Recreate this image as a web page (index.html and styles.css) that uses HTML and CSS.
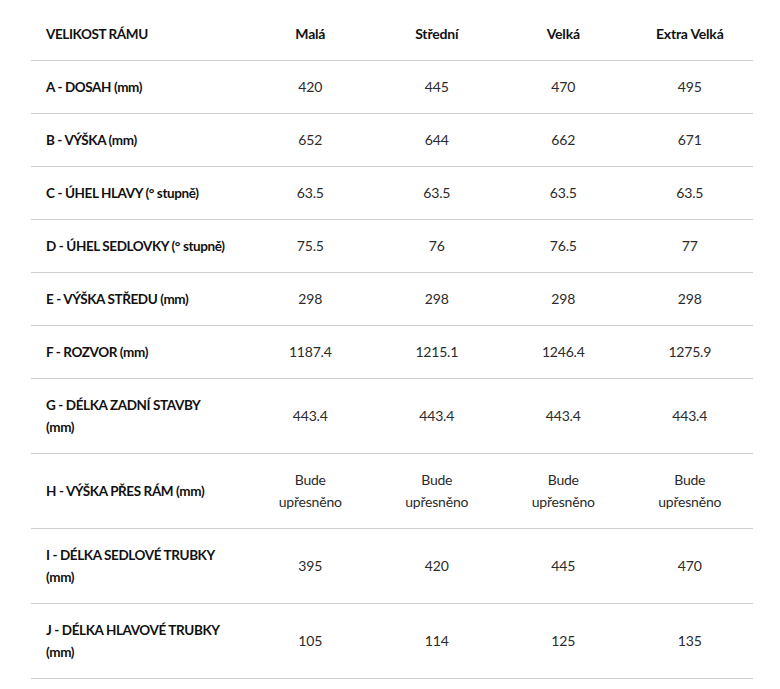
FILE: index.html
```html
<!DOCTYPE html>
<html lang="cs">
<head>
<meta charset="utf-8">
<title>Geometrie rámu</title>
<link rel="stylesheet" href="styles.css">
</head>
<body>
<div class="wrap">
<table class="geo">
<colgroup>
<col class="c-label"><col class="c-val"><col class="c-val"><col class="c-val"><col class="c-val">
</colgroup>
<thead>
<tr><th class="label">VELIKOST RÁMU</th><th>Malá</th><th>Střední</th><th>Velká</th><th>Extra Velká</th></tr>
</thead>
<tbody>
<tr><th class="label">A - DOSAH (mm)</th><td>420</td><td>445</td><td>470</td><td>495</td></tr>
<tr><th class="label">B - VÝŠKA (mm)</th><td>652</td><td>644</td><td>662</td><td>671</td></tr>
<tr><th class="label">C - ÚHEL HLAVY (° stupně)</th><td>63.5</td><td>63.5</td><td>63.5</td><td>63.5</td></tr>
<tr><th class="label">D - ÚHEL SEDLOVKY (° stupně)</th><td>75.5</td><td>76</td><td>76.5</td><td>77</td></tr>
<tr><th class="label">E - VÝŠKA STŘEDU (mm)</th><td>298</td><td>298</td><td>298</td><td>298</td></tr>
<tr><th class="label">F - ROZVOR (mm)</th><td>1187.4</td><td>1215.1</td><td>1246.4</td><td>1275.9</td></tr>
<tr><th class="label">G - DÉLKA ZADNÍ STAVBY (mm)</th><td>443.4</td><td>443.4</td><td>443.4</td><td>443.4</td></tr>
<tr><th class="label">H - VÝŠKA PŘES RÁM (mm)</th><td>Bude upřesněno</td><td>Bude upřesněno</td><td>Bude upřesněno</td><td>Bude upřesněno</td></tr>
<tr><th class="label">I - DÉLKA SEDLOVÉ TRUBKY (mm)</th><td>395</td><td>420</td><td>445</td><td>470</td></tr>
<tr><th class="label">J - DÉLKA HLAVOVÉ TRUBKY (mm)</th><td>105</td><td>114</td><td>125</td><td>135</td></tr>
</tbody>
</table>
</div>
</body>
</html>
```
FILE: styles.css
```css
html, body {
  margin: 0;
  padding: 0;
  background: #ffffff;
}
body {
  font-family: Lato, "Noto Sans", "Liberation Sans", sans-serif;
  color: #1a1a1a;
}
.wrap {
  padding: 8px 0 0 31px;
}
.geo {
  width: 722px;
  border-collapse: collapse;
  table-layout: fixed;
  font-size: 14px;
  line-height: 22px;
}
.c-label { width: 216px; }
.c-val { width: 126.5px; }
.geo th, .geo td {
  padding: 15px 15px;
  text-align: center;
  vertical-align: middle;
  border-bottom: 1px solid #cfcfcf;
}
.geo thead th {
  font-weight: 700;
  color: #111;
  letter-spacing: -0.2px;
}
.geo th.label {
  text-align: left;
  font-weight: 700;
  font-size: 13.5px;
  letter-spacing: -0.4px;
  color: #111;
  padding-right: 19px;
}
.geo td {
  font-weight: 400;
  color: #2b2b2b;
  letter-spacing: -0.2px;
}
```
